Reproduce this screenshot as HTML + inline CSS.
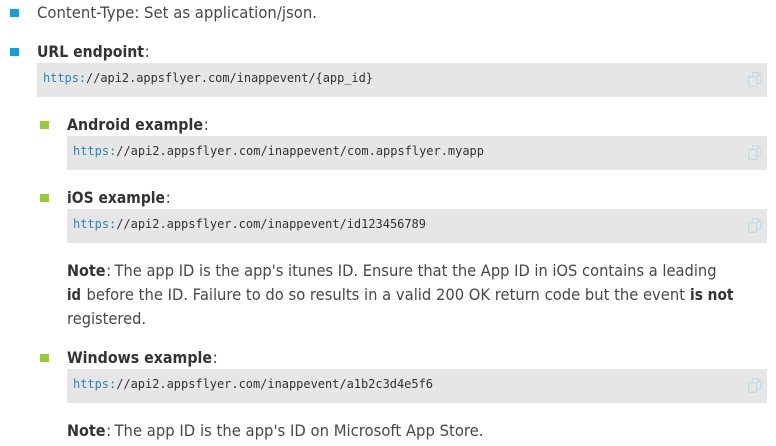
<!DOCTYPE html>
<html><head><meta charset="utf-8"><style>
html,body{margin:0;padding:0;background:#fff;width:776px;height:446px;overflow:hidden}
svg{display:block}
.r{font:16px "DejaVu Sans",sans-serif;fill:#484848}
.b{font:bold 16px "DejaVu Sans",sans-serif;fill:#333}
.c{font:12px "DejaVu Sans Mono",monospace;fill:#333}
.h{fill:#2a86b0}
</style></head><body>
<svg width="776" height="446" viewBox="0 0 776 446" xmlns="http://www.w3.org/2000/svg">
<defs><g id="i" fill="none" stroke="#c4dde9" stroke-width="1.2"><path d="M752.5 76V72.6H758L760.5 75V83.4H757"/><path d="M757.6 72.6V75.5H760.5"/><path d="M748.6 76.6H756.6V86.4H748.6Z"/></g></defs>
<rect x="10" y="9" width="9" height="8" fill="#0ea1e0"/>
<rect x="10" y="48" width="9" height="8" fill="#0ea1e0"/>
<rect x="40" y="121" width="9" height="8" fill="#9c3"/>
<rect x="40" y="194" width="9" height="8" fill="#9c3"/>
<rect x="40" y="354" width="9" height="8" fill="#9c3"/>
<rect x="37" y="63" width="730" height="34" fill="#e6e6e6"/>
<rect x="67" y="136" width="700" height="34" fill="#e6e6e6"/>
<rect x="67" y="209" width="700" height="34" fill="#e6e6e6"/>
<rect x="67" y="369" width="700" height="34" fill="#e6e6e6"/>
<use href="#i"/><use href="#i" y="73"/><use href="#i" y="146"/><use href="#i" y="306"/>
<text class="r" x="37" y="18" textLength="280" lengthAdjust="spacingAndGlyphs">Content-Type: Set as application/json.</text>
<text class="b" x="37" y="57" textLength="107" lengthAdjust="spacingAndGlyphs">URL endpoint</text><text class="r" x="144.5" y="57">:</text>
<text class="c" x="43" y="82" textLength="330"><tspan class="h">https:</tspan>//api2.appsflyer.com/inappevent/{app_id}</text>
<text class="b" x="67" y="130" textLength="136" lengthAdjust="spacingAndGlyphs">Android example</text><text class="r" x="203.5" y="130">:</text>
<text class="c" x="73" y="155" textLength="411"><tspan class="h">https:</tspan>//api2.appsflyer.com/inappevent/com.appsflyer.myapp</text>
<text class="b" x="67" y="203" textLength="98" lengthAdjust="spacingAndGlyphs">iOS example</text><text class="r" x="165.5" y="203">:</text>
<text class="c" x="73" y="228" textLength="353"><tspan class="h">https:</tspan>//api2.appsflyer.com/inappevent/id123456789</text>
<text class="b" x="67" y="276" textLength="38.5" lengthAdjust="spacingAndGlyphs">Note</text><text class="r" x="106" y="276">:</text>
<text class="r" x="114.5" y="276" textLength="602" lengthAdjust="spacingAndGlyphs">The app ID is the app's itunes ID. Ensure that the App ID in iOS contains a leading</text>
<text class="b" x="67" y="300" textLength="14" lengthAdjust="spacingAndGlyphs">id</text>
<text class="r" x="86.5" y="300" textLength="598.5" lengthAdjust="spacingAndGlyphs">before the ID. Failure to do so results in a valid 200 OK return code but the event</text>
<text class="b" x="690" y="300" textLength="43.5" lengthAdjust="spacingAndGlyphs">is not</text>
<text class="r" x="67" y="324" textLength="79" lengthAdjust="spacingAndGlyphs">registered.</text>
<text class="b" x="67" y="363" textLength="145" lengthAdjust="spacingAndGlyphs">Windows example</text><text class="r" x="212.5" y="363">:</text>
<text class="c" x="73" y="388" textLength="360"><tspan class="h">https:</tspan>//api2.appsflyer.com/inappevent/a1b2c3d4e5f6</text>
<text class="b" x="67" y="436" textLength="38.5" lengthAdjust="spacingAndGlyphs">Note</text><text class="r" x="106" y="436">:</text>
<text class="r" x="114.5" y="436" textLength="369" lengthAdjust="spacingAndGlyphs">The app ID is the app's ID on Microsoft App Store.</text>
</svg>
</body></html>
